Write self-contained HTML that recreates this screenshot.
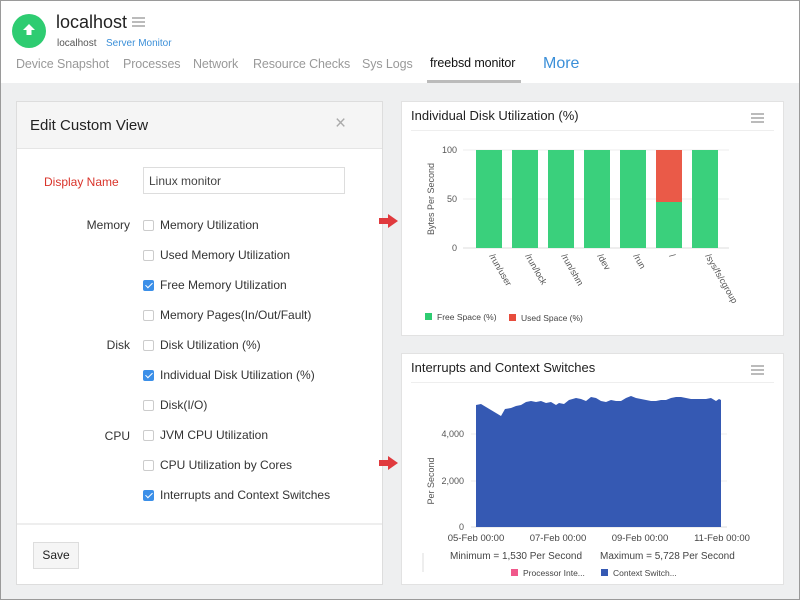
<!DOCTYPE html>
<html><head><meta charset="utf-8"><style>
*{margin:0;padding:0;box-sizing:border-box}
body{width:800px;height:600px;overflow:hidden;font-family:"Liberation Sans",sans-serif;background:#fff;position:relative}
.a{position:absolute}
.frame{position:absolute;left:0;top:0;width:800px;height:600px;border:1px solid #9a9a9a;pointer-events:none}
.tab{position:absolute;top:57px;font-size:12.5px;color:#999;letter-spacing:-0.1px}
.lbl{position:absolute;font-size:12px;color:#333;text-align:right;width:60px}
.cb{position:absolute;left:143px;width:11px;height:11px;border:1px solid #ccc;border-radius:2px;background:#fff}
.cb.on{background:#3b8fe8;border-color:#3b8fe8}
.cb.on:after{content:"";position:absolute;left:3px;top:0px;width:3px;height:6px;border:solid #fff;border-width:0 1.5px 1.5px 0;transform:rotate(45deg)}
.it{position:absolute;left:160px;font-size:12px;color:#333}
.card{position:absolute;background:#fff;border:1px solid #e2e2e2}
.ham{position:absolute;width:13px;height:2px;background:#bbb;box-shadow:0 4px 0 #bbb,0 8px 0 #bbb}
</style></head><body>
<div class="a" style="left:12px;top:14px;width:34px;height:34px;border-radius:50%;background:#2ecc71"></div>
<svg class="a" style="left:21px;top:22px" width="16" height="16" viewBox="0 0 16 16"><path d="M8 2 L14 8 H10.5 V13 H5.5 V8 H2 Z" fill="#fff"/></svg>
<div class="a" style="left:56px;top:12px;font-size:18px;color:#222">localhost</div>
<div class="ham" style="left:132px;top:17px"></div>
<div class="a" style="left:57px;top:38px;font-size:10px;color:#555">localhost</div>
<div class="a" style="left:106px;top:38px;font-size:10px;color:#3b8fd8">Server Monitor</div>
<div class="tab" style="left:16px">Device Snapshot</div>
<div class="tab" style="left:123px">Processes</div>
<div class="tab" style="left:193px">Network</div>
<div class="tab" style="left:253px">Resource Checks</div>
<div class="tab" style="left:362px">Sys Logs</div>
<div class="tab" style="left:430px;color:#111;top:56px;font-size:12.5px">freebsd monitor</div>
<div class="a" style="left:427px;top:80px;width:94px;height:3px;background:#bbb"></div>
<div class="a" style="left:543px;top:55px;font-size:16px;color:#3b8fd8">More</div>
<div class="a" style="left:0;top:83px;width:800px;height:517px;background:#eeeff0"></div>

<div class="a" style="left:16px;top:101px;width:367px;height:484px;background:#fff;border:1px solid #ddd"></div>
<div class="a" style="left:17px;top:102px;width:365px;height:47px;background:#f5f5f5;border-bottom:1px solid #e5e5e5"></div>
<div class="a" style="left:30px;top:117px;font-size:15px;color:#222">Edit Custom View</div>
<div class="a" style="left:335px;top:113px;font-size:19px;color:#aaa">×</div>
<div class="a" style="left:44px;top:175px;font-size:12px;color:#d9342b">Display Name</div>
<div class="a" style="left:143px;top:167px;width:202px;height:27px;border:1px solid #ddd;font-size:12px;color:#444;padding:6px 5px">Linux monitor</div>
<div class="lbl" style="left:70px;top:218px">Memory</div>
<div class="lbl" style="left:70px;top:338px">Disk</div>
<div class="lbl" style="left:70px;top:429px">CPU</div>
<div class="cb" style="top:220px"></div><div class="it" style="top:218px">Memory Utilization</div>
<div class="cb" style="top:250px"></div><div class="it" style="top:248px">Used Memory Utilization</div>
<div class="cb on" style="top:280px"></div><div class="it" style="top:278px">Free Memory Utilization</div>
<div class="cb" style="top:310px"></div><div class="it" style="top:308px">Memory Pages(In/Out/Fault)</div>
<div class="cb" style="top:340px"></div><div class="it" style="top:338px">Disk Utilization (%)</div>
<div class="cb on" style="top:370px"></div><div class="it" style="top:368px">Individual Disk Utilization (%)</div>
<div class="cb" style="top:400px"></div><div class="it" style="top:398px">Disk(I/O)</div>
<div class="cb" style="top:430px"></div><div class="it" style="top:428px">JVM CPU Utilization</div>
<div class="cb" style="top:460px"></div><div class="it" style="top:458px">CPU Utilization by Cores</div>
<div class="cb on" style="top:490px"></div><div class="it" style="top:488px">Interrupts and Context Switches</div>
<div class="a" style="left:17px;top:523px;width:365px;height:2px;background:#eee"></div>
<div class="a" style="left:33px;top:542px;width:46px;height:27px;border:1px solid #ddd;background:#f5f5f5;font-size:12px;color:#222;text-align:center;line-height:25px">Save</div>

<svg class="a" style="left:378px;top:213px" width="22" height="16"><path d="M1 5 H10 V1 L20 8 L10 15 V11 H1 Z" fill="#e03a3e"/></svg>
<svg class="a" style="left:378px;top:455px" width="22" height="16"><path d="M1 5 H10 V1 L20 8 L10 15 V11 H1 Z" fill="#e03a3e"/></svg>

<div class="card" style="left:401px;top:101px;width:383px;height:235px"></div>
<div class="a" style="left:411px;top:108px;font-size:13px;color:#222">Individual Disk Utilization (%)</div>
<div class="ham" style="left:751px;top:113px"></div>
<div class="a" style="left:411px;top:130px;width:363px;height:1px;background:#eee"></div>
<svg class="a" style="left:401px;top:131px" width="383" height="204" font-family="Liberation Sans, sans-serif">
<line x1="62" y1="19" x2="328" y2="19" stroke="#eee"/><line x1="62" y1="68" x2="328" y2="68" stroke="#eee"/><line x1="62" y1="117" x2="328" y2="117" stroke="#ddd"/>
<g font-size="9" fill="#555" text-anchor="end"><text x="56" y="22">100</text><text x="56" y="71">50</text><text x="56" y="120">0</text></g>
<text transform="translate(33,68) rotate(-90)" font-size="9" fill="#555" text-anchor="middle">Bytes Per Second</text>
<g fill="#3ad07c"><rect x="75" y="19" width="26" height="98"/><rect x="111" y="19" width="26" height="98"/><rect x="147" y="19" width="26" height="98"/><rect x="183" y="19" width="26" height="98"/><rect x="219" y="19" width="26" height="98"/><rect x="255" y="71" width="26" height="46"/><rect x="291" y="19" width="26" height="98"/></g>
<rect x="255" y="19" width="26" height="52" fill="#ea5a48"/>
<g font-size="9" fill="#555"><text transform="translate(88,125) rotate(60)">/run/user</text><text transform="translate(124,125) rotate(60)">/run/lock</text><text transform="translate(160,125) rotate(60)">/run/shm</text><text transform="translate(196,125) rotate(60)">/dev</text><text transform="translate(232,125) rotate(60)">/run</text><text transform="translate(268,125) rotate(60)">/</text><text transform="translate(304,125) rotate(60)">/sys/fs/cgroup</text></g>
<rect x="24" y="182" width="7" height="7" fill="#2ecc71"/><text x="36" y="189" font-size="8.5" fill="#444">Free Space (%)</text>
<rect x="108" y="183" width="7" height="7" fill="#e74c3c"/><text x="120" y="190" font-size="8.5" fill="#444">Used Space (%)</text>
</svg>

<div class="card" style="left:401px;top:353px;width:383px;height:232px"></div>
<div class="a" style="left:411px;top:360px;font-size:13px;color:#222">Interrupts and Context Switches</div>
<div class="ham" style="left:751px;top:365px"></div>
<div class="a" style="left:411px;top:382px;width:363px;height:1px;background:#eee"></div>
<svg class="a" style="left:401px;top:383px" width="383" height="202" font-family="Liberation Sans, sans-serif">
<line x1="70" y1="51" x2="326" y2="51" stroke="#eee"/><line x1="70" y1="98" x2="326" y2="98" stroke="#eee"/><line x1="70" y1="144" x2="326" y2="144" stroke="#ddd"/>
<g font-size="9" fill="#555" text-anchor="end"><text x="63" y="54">4,000</text><text x="63" y="101">2,000</text><text x="63" y="147">0</text></g>
<text transform="translate(33,98) rotate(-90)" font-size="9" fill="#555" text-anchor="middle">Per Second</text>
<path d="M75 22 L80 21 L85 24 L90 27 L95 30 L100 33 L104 26 L110 25 L115 23 L120 22 L125 19 L130 18 L135 19 L140 18 L145 20 L150 19 L155 22 L158 20 L163 21 L168 17 L175 15 L180 16 L185 18 L190 14 L195 15 L200 18 L205 19 L210 17 L215 18 L220 18 L225 15 L230 13 L235 15 L240 16 L245 17 L250 18 L255 18 L260 17 L265 17 L270 15 L275 14 L280 14 L285 15 L290 16 L295 16 L300 16 L305 16 L310 15 L315 18 L318 16 L320 17 L320 144 L75 144 Z" fill="#3559b3"/>
<g font-size="9.5" fill="#444" text-anchor="middle"><text x="75" y="158">05-Feb 00:00</text><text x="157" y="158">07-Feb 00:00</text><text x="239" y="158">09-Feb 00:00</text><text x="321" y="158">11-Feb 00:00</text></g>
<text x="49" y="176" font-size="10" fill="#444">Minimum = 1,530 Per Second</text>
<text x="199" y="176" font-size="10" fill="#444">Maximum = 5,728 Per Second</text>
<line x1="22" y1="170" x2="22" y2="189" stroke="#ddd"/>
<rect x="110" y="186" width="7" height="7" fill="#f0588b"/><text x="122" y="193" font-size="8.5" fill="#444">Processor Inte...</text>
<rect x="200" y="186" width="7" height="7" fill="#3559b3"/><text x="212" y="193" font-size="8.5" fill="#444">Context Switch...</text>
</svg>
<div class="frame"></div>
</body></html>
